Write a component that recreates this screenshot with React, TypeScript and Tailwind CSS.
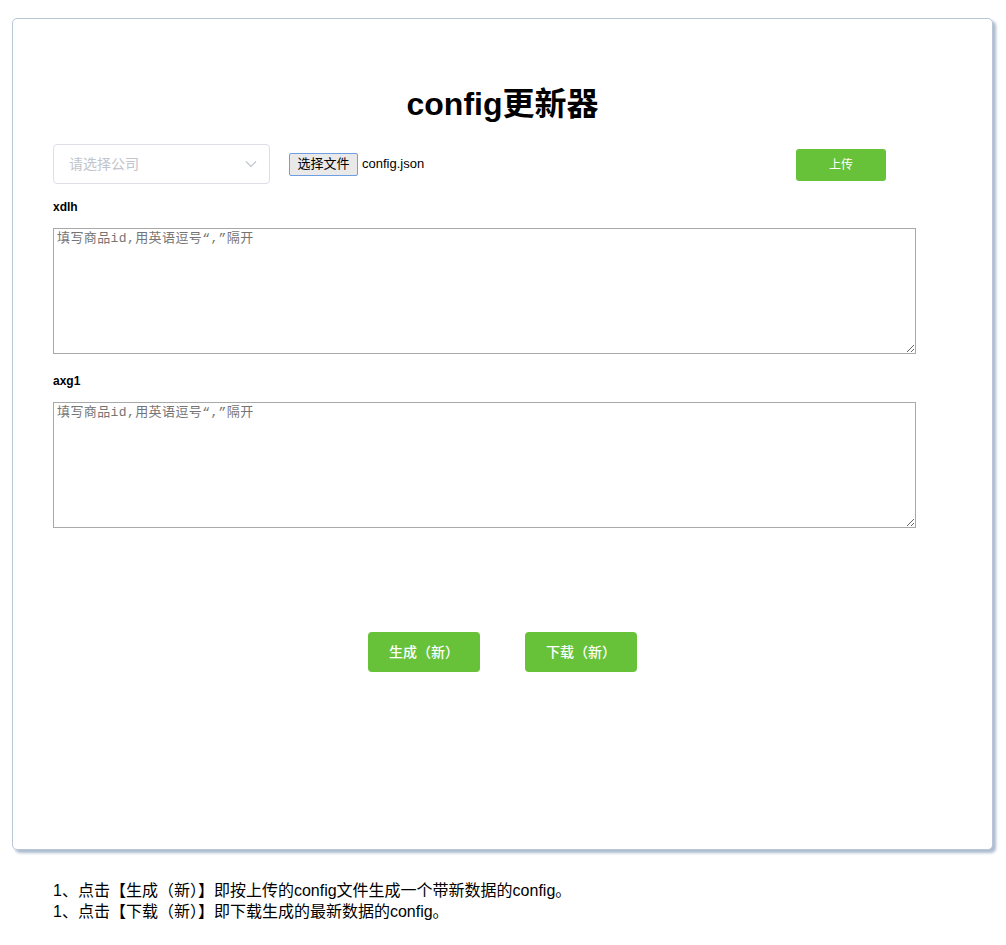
const sans = "font-['Liberation_Sans','Noto_Sans_CJK_SC',sans-serif]";
const mono = "font-['Liberation_Mono','Noto_Sans_CJK_SC',monospace]";

function Field({ label }: { label: string }) {
  return (
    <div className="flex flex-col">
      <div className="h-[22px] text-[12px] font-bold leading-[22px] text-black">{label}</div>
      <textarea
        placeholder="填写商品id,用英语逗号“,”隔开"
        className={`mt-[10px] h-[126px] w-[863px] resize-y border border-[#a9a9a9] px-[3px] py-[2px] text-[13px] leading-[16px] tracking-[0.4px] text-black outline-none placeholder:text-[#757575] ${mono}`}
      />
    </div>
  );
}

export default function App() {
  return (
    <div className={`min-h-screen bg-white pt-[18px] ${sans}`}>
      <div className="ml-[12px] h-[832px] w-[981px] rounded-[5px] border border-[#b8c6d8] bg-white px-[40px] shadow-[3px_3px_3px_rgba(150,170,195,0.8)]">
        <h1 className="pt-[65px] text-center text-[32px] font-bold leading-[40px] text-black">config更新器</h1>

        <div className="mt-[20px] flex items-center">
          <div className="flex h-[40px] w-[217px] items-center justify-between rounded-[4px] border border-[#dcdfe6] pl-[15px] pr-[12px]">
            <span className="text-[14px] text-[#c0c4cc]">请选择公司</span>
            <svg width="12" height="8" viewBox="0 0 12 8" fill="none">
              <path d="M1 1.5 6 6.5 11 1.5" stroke="#c0c4cc" strokeWidth="1.2" />
            </svg>
          </div>
          <div className="ml-[19px] flex items-center">
            <button className="h-[23px] w-[69px] rounded-[2px] border border-[#6f9fe3] bg-[#e9e9e9] text-[13px] leading-[20px] text-black">
              选择文件
            </button>
            <span className="ml-[4px] text-[13px] text-black">config.json</span>
          </div>
          <button className="ml-auto mr-[66px] mt-[2px] h-[32px] w-[90px] rounded-[3px] bg-[#67c23a] text-[12px] text-white">上传</button>
        </div>

        <div className="mt-[12px] flex flex-col gap-[16px]">
          <Field label="xdlh" />
          <Field label="axg1" />
        </div>

        <div className="mt-[104px] flex justify-center gap-[45px]">
          <button className="h-[40px] w-[112px] rounded-[4px] bg-[#67c23a] text-[14px] font-medium text-white">生成（新）</button>
          <button className="h-[40px] w-[112px] rounded-[4px] bg-[#67c23a] text-[14px] font-medium text-white">下载（新）</button>
        </div>
      </div>

      <div className="ml-[53px] mt-[30px] text-[16px] leading-[21px] text-black">
        <p>1、点击【生成（新）】即按上传的config文件生成一个带新数据的config。</p>
        <p>1、点击【下载（新）】即下载生成的最新数据的config。</p>
      </div>
    </div>
  );
}
